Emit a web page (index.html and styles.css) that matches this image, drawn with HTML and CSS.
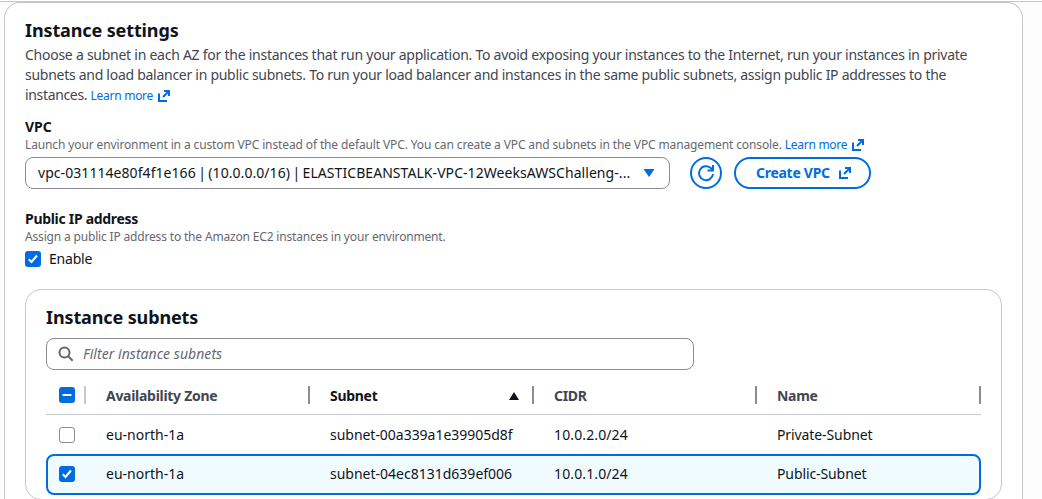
FILE: index.html
```html
<!DOCTYPE html>
<html lang="en">
<head>
<meta charset="utf-8">
<title>Instance settings</title>
<link rel="stylesheet" href="styles.css">
</head>
<body>
<svg class="defs" width="0" height="0">
  <symbol id="external" viewBox="0 0 14 14"><path d="M7 2h5v5M12 2 6 8M2 4.500V12h8"/></symbol>
  <symbol id="check" viewBox="0 0 16 16"><path d="m3.800 8.300 2.700 2.700 5.500-6.500"/></symbol>
</svg>
<main class="panel">
  <h2 class="title">Instance settings</h2>
  <p class="description">
    <span class="line">Choose a subnet in each AZ for the instances that run your application. To avoid exposing your instances to the Internet, run your instances in private</span>
    <span class="line line-2">subnets and load balancer in public subnets. To run your load balancer and instances in the same public subnets, assign public IP addresses to the</span>
    <span class="line line-3">instances. <a class="link">Learn more<svg class="icon link-icon"><use href="#external"/></svg></a></span>
  </p>
  <section class="field">
    <h3 class="label">VPC</h3>
    <p class="hint">Launch your environment in a custom VPC instead of the default VPC. You can create a VPC and subnets in the VPC management console. <a class="link">Learn more<svg class="icon link-icon"><use href="#external"/></svg></a></p>
    <div class="controls">
      <div class="select"><span class="select-text">vpc-031114e80f4f1e166 | (10.0.0.0/16) | ELASTICBEANSTALK-VPC-12WeeksAWSChalleng-...</span><svg class="caret" viewBox="0 0 12 8"><path d="M0.500 0h11L6 8z"/></svg></div>
      <button class="button round" aria-label="Refresh"><svg class="icon refresh" viewBox="0 0 18 18"><path d="M16 10a7 7 0 1 1-2.500-6.200L16 6M16 1v5.500h-5.500"/></svg></button>
      <button class="button create"><span class="create-text">Create VPC</span><svg class="icon"><use href="#external"/></svg></button>
    </div>
  </section>
  <section class="field ip">
    <h3 class="label ip-label">Public IP address</h3>
    <p class="hint ip-hint">Assign a public IP address to the Amazon EC2 instances in your environment.</p>
    <label class="option"><span class="box checked"><svg><use href="#check"/></svg></span><span class="enable">Enable</span></label>
  </section>
  <section class="card">
    <h2 class="title card-title">Instance subnets</h2>
    <div class="search"><svg class="magnifier" viewBox="0 0 16 16"><circle cx="6.500" cy="6.500" r="5"/><path d="m10.200 10.200 4.500 4.500"/></svg><span class="placeholder">Filter instance subnets</span></div>
    <div class="table">
      <div class="row head">
        <div class="cell pick"><span class="box checked"><svg viewBox="0 0 16 16"><path d="M3.500 8h9"/></svg></span></div>
        <div class="cell"><span class="heading">Availability Zone</span></div>
        <div class="cell sorted"><span class="heading">Subnet</span><svg class="sort" viewBox="0 0 10 8"><path d="M5 0l5 8H0z"/></svg></div>
        <div class="cell"><span class="heading">CIDR</span></div>
        <div class="cell"><span class="heading">Name</span></div>
      </div>
      <div class="row">
        <div class="cell pick"><span class="box"></span></div>
        <div class="cell"><span>eu-north-1a</span></div>
        <div class="cell"><span class="subnet">subnet-00a339a1e39905d8f</span></div>
        <div class="cell"><span class="cidr">10.0.2.0/24</span></div>
        <div class="cell"><span class="name">Private-Subnet</span></div>
      </div>
      <div class="row selected">
        <div class="cell pick"><span class="box checked"><svg><use href="#check"/></svg></span></div>
        <div class="cell"><span>eu-north-1a</span></div>
        <div class="cell"><span>subnet-04ec8131d639ef006</span></div>
        <div class="cell"><span class="cidr">10.0.1.0/24</span></div>
        <div class="cell"><span class="name">Public-Subnet</span></div>
      </div>
    </div>
  </section>
</main>
</body>
</html>
```
FILE: styles.css
```css
* { box-sizing: border-box; }
html { height: 100%; overflow: hidden; }
body { margin: 0; height: 499px; overflow: hidden; padding: 1px 19px 0 4px; background: linear-gradient(#fff 1px, #c6c6cd 1px, #c6c6cd 2px, #fcfcfd 2px); font: 14px/20px "Noto Sans", "Open Sans", sans-serif; color: #0f141a; }
.defs { position: absolute; }
h2, h3, p { margin: 0; }
.panel { margin-top: 1px; height: 497px; overflow: hidden; padding: 16px 20px 0; border: 1px solid #c6c6cd; border-bottom: 0; border-radius: 16px 16px 0 0; background: #fff; }
.title { font-size: 18px; line-height: 22px; font-weight: 700; white-space: nowrap; letter-spacing: -0.12px; }
.description { color: #424650; margin-top: 4px; letter-spacing: -0.255px; }
.line { display: block; white-space: nowrap; height: 20px; }
.line-2 { letter-spacing: -0.275px; }
.line-3 { letter-spacing: -0.34px; }
.link { color: #006ce0; font-size: 12px; letter-spacing: -0.27px; }
.icon { width: 14px; height: 14px; flex: none; fill: none; stroke: currentColor; stroke-width: 2; }
.link-icon { margin-left: 4px; vertical-align: -3px; }
.field { margin-top: 12px; }
.label { font-size: 14px; line-height: 20px; font-weight: 700; }
.ip-label { letter-spacing: -0.3px; }
.hint { font-size: 12px; line-height: 16px; color: #656871; white-space: nowrap; letter-spacing: -0.125px; }
.ip-hint { letter-spacing: -0.17px; }
.controls { display: flex; margin-top: 4px; }
.select { width: 645px; height: 32px; border: 1px solid #8c8c94; border-radius: 8px; padding: 0 14px 0 12px; display: flex; align-items: center; justify-content: space-between; white-space: nowrap; }
.select-text { letter-spacing: 0.06px; word-spacing: -1.300px; }
.caret { width: 12px; height: 8px; fill: #006ce0; flex: none; }
.button { height: 32px; border: 2px solid #006ce0; border-radius: 16px; background: #fff; color: #006ce0; font: 700 14px/20px "Noto Sans", sans-serif; display: flex; align-items: center; justify-content: center; padding: 0; }
.round { width: 32px; margin-left: 20px; }
.round .refresh { width: 18px; height: 18px; }
.create { width: 137px; margin-left: 12px; padding: 0 17px 0 20px; justify-content: space-between; }
.create-text { letter-spacing: -0.28px; }
.ip { margin-top: 20px; }
.option { display: flex; align-items: center; margin-top: 4px; gap: 8px; }
.enable { letter-spacing: -0.2px; }
.box { width: 16px; height: 16px; flex: none; border: 1px solid #8c8c94; border-radius: 3px; background: #fff; display: block; }
.box svg { display: block; width: 16px; height: 16px; fill: none; stroke: #fff; stroke-width: 2; }
.checked { border: 0; background: #006ce0; }
.card { margin-top: 20px; height: 211px; padding: 16px 20px 0; border: 1px solid #c6c6cd; border-radius: 16px; }
.search { width: 648px; height: 32px; margin-top: 10px; border: 1px solid #8c8c94; border-radius: 8px; padding: 0 11px; display: flex; align-items: center; gap: 9px; color: #656871; font-style: italic; }
.magnifier { width: 16px; height: 16px; fill: none; stroke: #656871; stroke-width: 2; }
.placeholder { letter-spacing: 0.04px; }
.table { margin-top: 6px; width: 935px; }
.row { display: grid; grid-template-columns: 40px 224px 224px 223px 224px; height: 40px; align-items: center; }
.cell { padding-left: 20px; white-space: nowrap; height: 20px; display: flex; align-items: center; }
.pick { padding-left: 13px; }
.head { height: 39px; border-bottom: 1px solid #c6c6cd; font-weight: 700; color: #424650; }
.head .cell { height: 18px; border-right: 2px solid #8c8c94; }
.head .pick { border-color: #c6c6cd; }
.head .sorted { justify-content: space-between; color: #0f141a; padding-right: 13px; }
.heading { letter-spacing: -0.29px; padding-top: 2px; }
.sort { width: 10px; height: 8px; margin-top: 1px; fill: #0f141a; }
.subnet { letter-spacing: -0.03px; }
.cidr { letter-spacing: 0.12px; }
.name { letter-spacing: -0.1px; }
.selected { height: 41px; margin-top: -1px; padding-bottom: 1px; border: 2px solid #006ce0; border-radius: 8px; background: #f0fbff; grid-template-columns: 38px 224px 224px 223px 222px; }
.selected .pick { padding-left: 11px; }
```
